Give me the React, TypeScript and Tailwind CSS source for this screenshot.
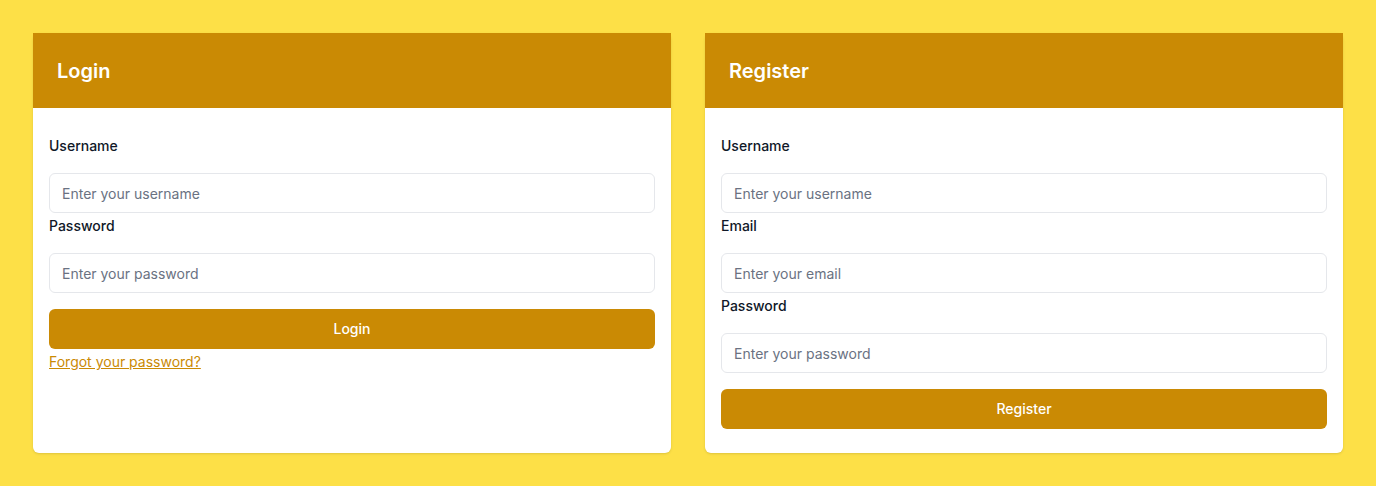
const Field = ({ label, type, placeholder }: { label: string; type: string; placeholder: string }) => (
  <div className="mt-px">
    <label className="block mb-[15px] text-sm font-medium leading-6 text-gray-900">{label}</label>
    <input
      type={type}
      placeholder={placeholder}
      className="block w-full h-10 px-3 text-sm text-gray-900 placeholder-gray-500 bg-white border border-gray-200 rounded-md outline-none"
    />
  </div>
);

const Card = ({ title, children }: { title: string; children: React.ReactNode }) => (
  <div className="bg-white rounded-md shadow-sm flex flex-col">
    <div className="h-[75px] bg-[#ca8a04] px-6 flex items-center">
      <h2 className="text-xl font-semibold text-white">{title}</h2>
    </div>
    <div className="px-4 pt-[25px] pb-6 flex-1">{children}</div>
  </div>
);

const App: React.FC = () => {
  return (
    <div className="min-h-screen bg-[#fde047] p-[33px] font-['Inter',sans-serif]">
      <div className="grid grid-cols-2 gap-[34px]">
        <Card title="Login">
          <Field label="Username" type="text" placeholder="Enter your username" />
          <Field label="Password" type="password" placeholder="Enter your password" />
          <button className="mt-4 w-full h-10 rounded-md bg-[#ca8a04] text-sm font-medium text-white">Login</button>
          <a href="#" className="block mt-[3px] text-sm leading-5 text-[#ca8a04] underline">
            Forgot your password?
          </a>
        </Card>
        <Card title="Register">
          <Field label="Username" type="text" placeholder="Enter your username" />
          <Field label="Email" type="email" placeholder="Enter your email" />
          <Field label="Password" type="password" placeholder="Enter your password" />
          <button className="mt-4 w-full h-10 rounded-md bg-[#ca8a04] text-sm font-medium text-white">Register</button>
        </Card>
      </div>
    </div>
  );
};

export default App;
